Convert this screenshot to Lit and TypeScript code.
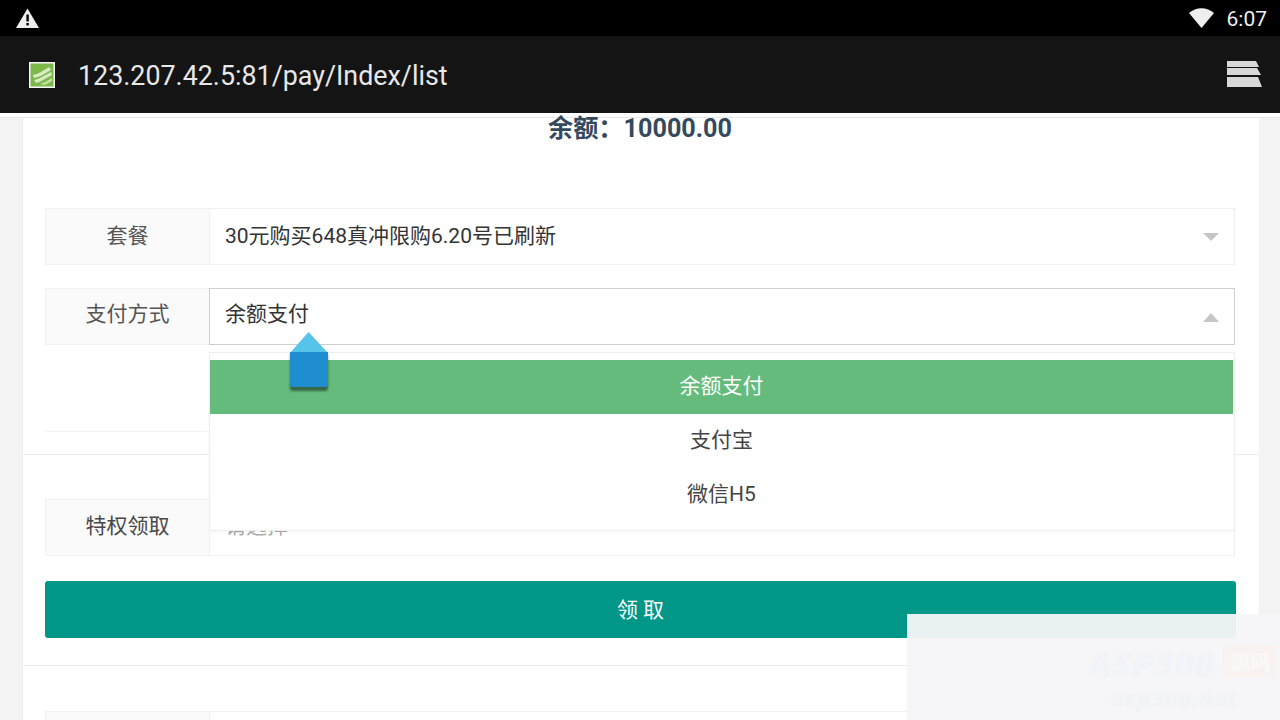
import { LitElement, html, css } from "lit";
import { customElement } from "lit/decorators.js";

@customElement("app-root")
export class AppRoot extends LitElement {
  static styles = css`
    :host {
      display: flex;
      flex-direction: column;
      position: relative;
      width: 1280px;
      height: 720px;
      overflow: hidden;
      background: #f3f3f3;
      font-family: Roboto, "Noto Sans CJK SC", sans-serif;
      color: #444;
    }
    .status {
      height: 36px;
      flex: none;
      background: #000;
      display: flex;
      align-items: center;
      padding: 0 13px 0 16px;
      color: #eee;
    }
    .status .warn { width: 23px; height: 20px; margin-top: -1px; }
    .status .spacer { flex: 1; }
    .status .wifi { width: 25px; height: 20px; margin-right: 13px; margin-top: -1px; }
    .status .time { font-size: 21px; line-height: 38px; height: 36px; }
    .toolbar {
      height: 77px;
      flex: none;
      background: #141414;
      display: flex;
      align-items: center;
      padding: 0 18px 0 29px;
      color: #e8e8e8;
    }
    .favicon { width: 26px; height: 26px; margin-right: 23px; }
    .url { font-size: 26.85px; line-height: 34px; padding-top: 2px; flex: 1; white-space: nowrap; }
    .tabs { width: 36px; height: 30px; }
    .strip {
      height: 4px;
      flex: none;
      background: #fff;
      border-bottom: 1px solid #e6e6e6;
    }
    .page {
      flex: 1;
      min-height: 0;
      padding: 0 21px 0 22px;
    }
    .card {
      background: #fff;
      border: solid #ececec;
      border-width: 0 0 1px 1px;
      padding: 0 24px 0 22px;
    }
    .card.first { height: 337px; box-sizing: border-box; }
    .card.second { height: 211px; box-sizing: border-box; padding-top: 44px; }
    .card.third { padding-top: 45px; }
    .balance {
      text-align: center;
      font-size: 25.2px;
      line-height: 22px;
      font-weight: 700;
      color: #34495e;
      margin-bottom: 68px;
    }
    .row {
      display: flex;
      height: 57px;
      box-sizing: border-box;
      position: relative;
      font-size: 21px;
    }
    .row + .row { margin-top: 23px; }
    .label {
      width: 164px;
      flex: none;
      box-sizing: border-box;
      background: #fafafa;
      border: 1px solid #f2f2f2;
      border-right: none;
      display: flex;
      align-items: center;
      justify-content: center;
      padding-bottom: 6px;
      color: #555;
    }
    .value {
      flex: 1;
      box-sizing: border-box;
      border: 1px solid #f0f0f0;
      display: flex;
      align-items: center;
      padding: 0 15px 6px;
      color: #333;
      position: relative;
    }
    .row.high .label { padding-bottom: 9px; }
    .row.high .value { padding-bottom: 9px; }
    .row.mid .label { padding-bottom: 7px; color: #484848; }
    .row.mid .value { padding-bottom: 7px; }
    .value.open { border-color: #cfcfcf; }
    .value.placeholder { color: #aaa; }
    .arrow {
      position: absolute;
      right: 15px;
      top: 50%;
      margin-top: -4px;
      width: 0;
      height: 0;
      border-left: 8px solid transparent;
      border-right: 8px solid transparent;
    }
    .arrow.down { border-top: 8px solid #c6c6c6; }
    .arrow.up { border-bottom: 9px solid #c6c6c6; }
    .rule {
      margin-top: 86px;
      border-bottom: 1px solid #f3f3f3;
    }
    .panel {
      position: absolute;
      z-index: 2;
      left: 164px;
      right: 0;
      top: 64px;
      height: 179px;
      box-sizing: border-box;
      background: #fff;
      border: 1px solid #eeeeee;
      padding: 7px 1px 0 0;
      box-shadow: 0 1px 3px rgba(0, 0, 0, 0.03);
    }
    .option {
      height: 54px;
      box-sizing: border-box;
      padding-bottom: 6px;
      display: flex;
      align-items: center;
      justify-content: center;
      color: #444;
    }
    .option.selected {
      background: #64bb7c;
      color: #fff;
    }
    .submit {
      margin-top: 25px;
      height: 57px;
      box-sizing: border-box;
      padding-bottom: 4px;
      width: 1191px;
      border-radius: 3px;
      background: #009688;
      color: #fff;
      display: flex;
      align-items: center;
      justify-content: center;
      font-size: 21px;
      white-space: pre;
    }
    .handle {
      position: absolute;
      z-index: 3;
      left: 286px;
      top: 331px;
      width: 46px;
      height: 62px;
    }
    .mark {
      position: absolute;
      z-index: 4;
      left: 907px;
      top: 614px;
      right: 0;
      bottom: 0;
      background: rgba(245, 246, 249, 0.95);
      font-style: italic;
      font-weight: 800;
      font-family: "Open Sans", sans-serif;
    }
    .mark-logo {
      position: absolute;
      left: 181px;
      top: 30px;
      display: flex;
      align-items: center;
      gap: 8px;
      font-size: 35.4px;
      line-height: 38px;
      color: #f0f3f7;
      white-space: nowrap;
    }
    .mark-badge {
      width: 54px;
      height: 33px;
      margin-top: -3px;
      border-radius: 3px;
      background: #f8f3f0;
      color: #fbf9f8;
      font-size: 20px;
      line-height: 33px;
      text-align: center;
      font-style: normal;
    }
    .mark-site {
      position: absolute;
      left: 203px;
      top: 69px;
      font-size: 23.6px;
      line-height: 30px;
      color: #f2f3f6;
    }
  `;

  render() {
    return html`
      <div class="status">
        <svg class="warn" viewBox="0 0 23 20">
          <path d="M11.5 0.5 L23 20 H0 Z" fill="#eee" />
          <rect x="10.4" y="6.5" width="2.4" height="7" fill="#000" />
          <rect x="10.4" y="15" width="2.4" height="2.4" fill="#000" />
        </svg>
        <div class="spacer"></div>
        <svg class="wifi" viewBox="0 0 25 20">
          <path d="M0 5 C7 -1.5 18 -1.5 25 5 L12.5 20 Z" fill="#eee" />
        </svg>
        <div class="time">6:07</div>
      </div>
      <div class="toolbar">
        <svg class="favicon" viewBox="0 0 26 26">
          <rect width="26" height="26" fill="#f6f6f6" />
          <rect x="1.5" y="1.5" width="23" height="23" fill="#7cb84a" />
          <path d="M4 13 C9 12 14 9 20 5 L22 8 C16 12 10 15 5 16 Z" fill="#d9ebc2" />
          <path d="M5 18 C11 17 16 13 22 10 L23 13 C17 16 12 20 7 21 Z" fill="#d9ebc2" />
          <path d="M11 22 C15 21 19 18 23 16 L23 19 C20 21 18 22 15 23 Z" fill="#c4dea3" />
        </svg>
        <div class="url">123.207.42.5:81/pay/Index/list</div>
        <svg class="tabs" viewBox="0 0 36 30">
          <path d="M1 1 H30 L33 7 H1 Z" fill="#d8d8d8" />
          <path d="M1 8 H31 L35 15 H1 Z" fill="#d8d8d8" />
          <path d="M1 17 H32 L36 27 H1 Z" fill="#d8d8d8" />
        </svg>
      </div>
      <div class="strip"></div>
      <div class="page">
        <div class="card first">
          <div class="balance">余额：10000.00</div>
          <div class="row">
            <div class="label">套餐</div>
            <div class="value">30元购买648真冲限购6.20号已刷新<span class="arrow down"></span></div>
          </div>
          <div class="row high">
            <div class="label">支付方式</div>
            <div class="value open">余额支付<span class="arrow up"></span></div>
            <div class="panel">
              <div class="option selected">余额支付</div>
              <div class="option">支付宝</div>
              <div class="option">微信H5</div>
            </div>
          </div>
          <div class="rule"></div>
        </div>
        <div class="card second">
          <div class="row mid">
            <div class="label">特权领取</div>
            <div class="value placeholder">请选择</div>
          </div>
          <div class="submit">领 取</div>
        </div>
        <div class="card third">
          <div class="row">
            <div class="label"></div>
            <div class="value"></div>
          </div>
        </div>
      </div>
      <svg class="handle" viewBox="0 0 46 62">
        <defs>
          <filter id="s" x="-20%" y="-20%" width="140%" height="140%">
            <feGaussianBlur stdDeviation="1.2" />
          </filter>
        </defs>
        <rect x="4" y="22" width="38" height="38" rx="3" fill="#000" opacity="0.45" filter="url(#s)" />
        <path d="M4 22 L22.5 1 L42 22 Z" fill="#56c3e8" />
        <path d="M4 21 H42 V53 Q42 56 39 56 H7 Q4 56 4 53 Z" fill="#1e8ed0" />
      </svg>
      <div class="mark">
        <div class="mark-logo">ASP300<span class="mark-badge">源码</span></div>
        <div class="mark-site">asp300.net</div>
      </div>
    `;
  }
}
